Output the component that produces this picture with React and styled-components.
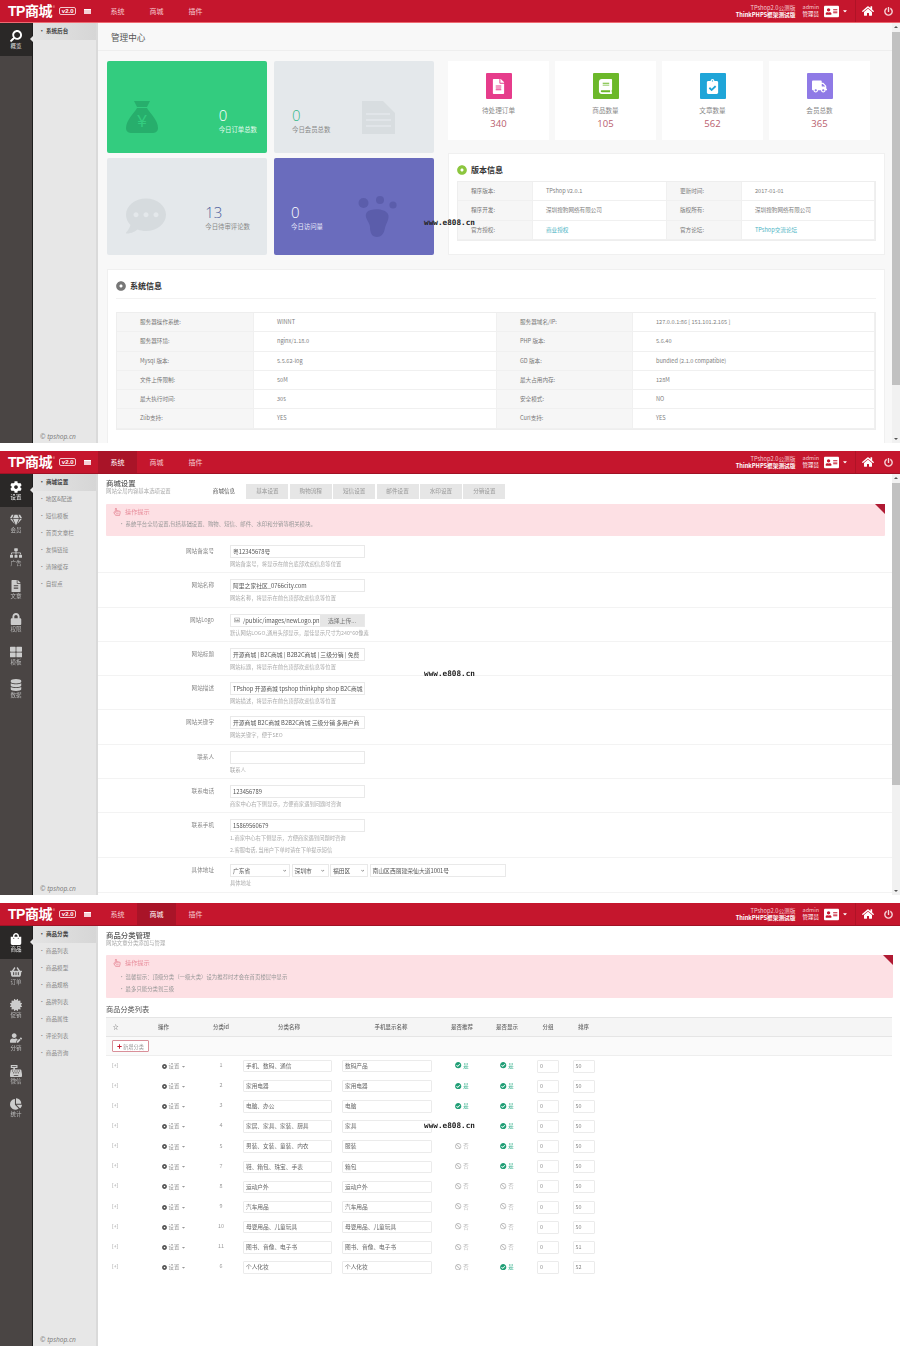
import styled, { createGlobalStyle } from "styled-components"
import {
  FaSearch, FaCog, FaGem, FaSitemap, FaFileAlt, FaLock, FaThLarge, FaDatabase,
  FaShoppingBag, FaShoppingBasket, FaCertificate, FaUserEdit, FaCashRegister, FaChartPie,
  FaHome, FaPowerOff, FaAddressCard, FaCaretDown, FaCommentDots, FaBook,
  FaClipboardCheck, FaTruck, FaCheckCircle, FaBan, FaPlus, FaRegHandPointer, FaRegImage,
  FaDotCircle, FaChevronDown,
} from "react-icons/fa"

const GlobalStyle = createGlobalStyle`
  html, body { margin: 0; padding: 0; background: #fff; }
  * { box-sizing: border-box; }
  body { font-family: "Noto Sans CJK SC", "Open Sans", sans-serif; }
`

const Page = styled.div`
  width: 900px;
  height: 1346px;
  display: flex;
  flex-direction: column;
  gap: 8px;
  overflow: hidden;
  filter: blur(0.35px);
`
const Screen = styled.section`
  position: relative;
  height: ${p => p.$h}px;
  display: flex;
  flex-direction: column;
  overflow: hidden;
`
const Watermark = styled.div`
  position: absolute;
  left: 424px;
  top: 218px;
  font: 600 7.7px/10px "DejaVu Sans Mono", monospace;
  color: #222;
`

/* top bar */
const Bar = styled.header`
  height: 23px;
  flex: none;
  display: flex;
  align-items: stretch;
  background: #c5162d;
  border-bottom: 1px solid ${p => p.$line};
  color: #fff;
`
const Brand = styled.div`
  width: 98px;
  flex: none;
  display: flex;
  align-items: center;
  padding-left: 8px;
`
const LogoText = styled.span`
  font: 700 14px/1 "Liberation Sans", "Noto Sans CJK SC", sans-serif;
  letter-spacing: -0.5px;
`
const LogoMark = styled.sup`
  font-size: 4px;
  align-self: flex-start;
  margin: 4px 0 0 1px;
  color: #f0b0b8;
`
const Version = styled.span`
  margin-left: 4px;
  height: 8px;
  padding: 0 2px;
  border: 1px solid #f3c9cf;
  border-radius: 2px;
  font: bold 6px/6px "Liberation Sans", sans-serif;
`
const MenuDot = styled.span`
  margin-left: 8px;
  width: 7px;
  height: 5px;
  background: #f4d0d5;
  border-top: 1px solid #fff;
`
const NavItem = styled.a`
  width: 39px;
  display: flex;
  align-items: center;
  justify-content: center;
  font-size: 7px;
  color: ${p => (p.$on ? "#fff" : "#f5cdd2")};
  background: ${p => (p.$on ? "#a91428" : "transparent")};
`
const BarRight = styled.div`
  margin-left: auto;
  display: flex;
  align-items: center;
  padding-right: 7px;
  height: 100%;
`
const Notice = styled.div`
  text-align: right;
  font-size: 5.7px;
  line-height: 7px;
  color: #f6ccd2;
  b { display: block; color: #fff; font-weight: 700; }
`
const Admin = styled.div`
  margin-left: 7px;
  text-align: right;
  font-size: 5.5px;
  line-height: 7px;
  color: #f6ccd2;
  span { display: block; color: #fff; }
`
const BarIcon = styled.span`
  display: flex;
  margin-left: ${p => p.$ml}px;
  font-size: ${p => p.$size}px;
  color: ${p => p.$color || "#fff"};
`
const BarLine = styled.span`
  width: 1px;
  height: 100%;
  margin-left: 7px;
  background: #b01326;
`

/* left columns */
const Body = styled.div`
  flex: 1;
  min-height: 0;
  display: flex;
`
const Rail = styled.nav`
  width: 33px;
  flex: none;
  background: #4a4544;
  border-right: 1px solid #1e1e1e;
`
const RailItem = styled.a`
  position: relative;
  height: 33px;
  display: flex;
  flex-direction: column;
  align-items: center;
  justify-content: center;
  font-size: 5.5px;
  line-height: 7px;
  color: ${p => (p.$on ? "#eee" : "#bbb")};
  background: ${p => (p.$on ? "#2a2827" : "transparent")};
  svg { font-size: 12px; color: ${p => (p.$on ? "#fff" : "#ccc")}; margin-bottom: 1px; }
  ${p => p.$on && `
    &::after {
      content: "";
      position: absolute;
      right: -1px;
      top: 13px;
      border: 3px solid transparent;
      border-right-color: #e7e7e7;
      border-left-width: 0;
    }
  `}
`
const MirrorSearch = styled(FaSearch)`
  transform: scaleX(-1);
`
const SubNav = styled.div`
  width: 65px;
  flex: none;
  display: flex;
  flex-direction: column;
  background: #e7e7e7;
  border-right: 2px solid #dadada;
`
const SubItem = styled.a`
  height: 17px;
  flex: none;
  padding-left: 6px;
  font-size: 5.6px;
  line-height: 17px;
  color: ${p => (p.$on ? "#444" : "#888")};
  font-weight: ${p => (p.$on ? 600 : 400)};
  background: ${p => (p.$on ? "linear-gradient(90deg, #e3e3e3, #d6d6d6)" : "transparent")};
  &::before { content: "· "; }
`
const Copy = styled.div`
  margin-top: auto;
  padding: 0 0 1px 7px;
  font: italic 6.6px/11px "Open Sans", sans-serif;
  color: #777;
`

/* scrollbar */
const Track = styled.div`
  width: 8px;
  flex: none;
  position: relative;
  background: #f1f1f1;
  &::before, &::after {
    content: "";
    position: absolute;
    left: 2px;
    border: 2px solid transparent;
    border-top-width: 0;
    border-bottom: 2px solid #555;
  }
  &::before { top: 3px; }
  &::after { bottom: 3px; transform: rotate(180deg); }
`
const Thumb = styled.div`
  margin-top: 9px;
  height: ${p => p.$h}px;
  background: #c1c1c1;
`

/* shared main */
const Main = styled.main`
  flex: 1;
  min-width: 0;
  overflow: hidden;
  background: ${p => p.$bg || "#fff"};
`

/* dashboard */
const TitleRow = styled.div`
  height: 28px;
  padding: 7px 0 0 13px;
  font-size: 8.6px;
  line-height: 14px;
  color: #555;
  border-bottom: 1px solid #eee;
`
const Dash = styled.div`
  padding: 10px 7px 0 9px;
  display: grid;
  grid-template-columns: 327px 437px;
  column-gap: 14px;
`
const Tiles = styled.div`
  display: grid;
  grid-template-columns: 160px 160px;
  grid-template-rows: 92px 97px;
  gap: 5px 7px;
`
const Tile = styled.div`
  position: relative;
  border-radius: 2px;
  background: ${p => p.$bg};
  display: flex;
  align-items: center;
  justify-content: ${p => (p.$reverse ? "flex-start" : "flex-end")};
  padding: ${p => p.$pad};
  color: ${p => p.$color};
`
const TileArt = styled.span`
  position: absolute;
  left: ${p => p.$x}px;
  top: ${p => p.$y}px;
  display: flex;
  font-size: ${p => p.$size}px;
  color: ${p => p.$color};
`
const TileNum = styled.div`
  font: 300 15px/17px "Open Sans", sans-serif;
  color: ${p => p.$color};
`
const TileText = styled.div`
  margin-top: 1px;
  font-size: 6.4px;
  line-height: 9px;
`
const RightCol = styled.div`
  display: flex;
  flex-direction: column;
  gap: 13px;
`
const Stats = styled.div`
  width: 422px;
  display: grid;
  grid-template-columns: repeat(4, 101px);
  justify-content: space-between;
`
const Stat = styled.div`
  height: 79px;
  background: #fff;
  display: flex;
  flex-direction: column;
  align-items: center;
  padding-top: 12px;
`
const StatIcon = styled.span`
  width: 26px;
  height: 26px;
  border-radius: 1px;
  background: ${p => p.$bg};
  display: flex;
  align-items: center;
  justify-content: center;
  color: #fff;
  font-size: 15px;
`
const StatName = styled.div`
  margin-top: 7px;
  font-size: 6.6px;
  line-height: 9px;
  color: #888;
`
const StatNum = styled.div`
  margin-top: 3px;
  font: 9.5px/12px "Open Sans", sans-serif;
  color: #b9606e;
`
const Panel = styled.div`
  background: #fff;
  border: 1px solid #f0f0f0;
  padding: 10px 8px 0;
  height: ${p => p.$h}px;
`
const SystemBox = styled(Panel)`
  grid-column: 1 / 3;
  margin-top: 14px;
`
const PanelTitle = styled.div`
  display: flex;
  align-items: center;
  gap: 4px;
  font-size: 8px;
  font-weight: 700;
  line-height: 12px;
  color: #333;
`
const TitleDot = styled.span`
  display: flex;
  font-size: 10px;
  color: ${p => p.$color};
`
const Rule = styled.div`
  height: 1px;
  margin: 6px 0 13px;
  background: #f2f2f2;
`
const InfoTable = styled.div`
  display: grid;
  grid-template-columns: ${p => p.$cols};
  border: 1px solid #eee;
  margin-top: ${p => p.$mt || 0}px;
`
const InfoCell = styled.div`
  height: 19.3px;
  font-size: 5.6px;
  line-height: 18px;
  white-space: nowrap;
  overflow: hidden;
  border-bottom: 1px solid #f0f0f0;
  border-right: 1px solid #f0f0f0;
  padding-left: ${p => p.$pl}px;
  color: ${p => (p.$link ? "#4bb4c4" : p.$label ? "#777" : "#808080")};
  background: ${p => (p.$label ? "#f6f6f6" : "#fff")};
`

/* page heading */
const Heading = styled.div`
  flex: none;
  width: ${p => p.$w || 200}px;
  h2 { margin: 0; font-size: 7.4px; line-height: 9px; font-weight: 500; color: #555; }
  p { margin: 0; font-size: 5.4px; line-height: 8px; color: #aaa; }
`
const TopRow = styled.div`
  display: flex;
  padding: 4px 0 0 8px;
  height: ${p => p.$h}px;
`
const Tabs = styled.div`
  display: flex;
  padding-top: 6px;
  gap: 1.4px;
`
const Tab = styled.a`
  width: 42px;
  height: 14.5px;
  text-align: center;
  font-size: 5.6px;
  line-height: 14px;
  color: ${p => (p.$on ? "#555" : "#999")};
  background: ${p => (p.$on ? "#fff" : "#e6e6e6")};
`
const TipBox = styled.div`
  position: relative;
  margin: 0 7px ${p => p.$mb || 0}px 8px;
  height: ${p => p.$h}px;
  padding: 3px 0 0 7px;
  background: #fde0e4;
  border-radius: 1px;
  &::after {
    content: "";
    position: absolute;
    right: 0;
    top: 0;
    border-style: solid;
    border-width: 0 10px 10px 0;
    border-color: transparent #b01a33 transparent transparent;
  }
`
const TipHead = styled.div`
  display: flex;
  align-items: center;
  gap: 4px;
  font-size: 6.2px;
  line-height: 9px;
  color: #e88e9c;
  svg { font-size: 8px; }
`
const TipLine = styled.div`
  margin: ${p => p.$mt}px 0 0 6px;
  font-size: 5.4px;
  line-height: 8px;
  color: #999;
  &::before { content: "· "; }
`

/* settings form */
const FormRow = styled.div`
  display: grid;
  grid-template-columns: 108px 1fr;
  column-gap: 16px;
  height: ${p => p.$h || 34.3}px;
  padding: 6px 0 0 8px;
  border-bottom: 1px solid #f3f3f3;
`
const FormLabel = styled.div`
  text-align: right;
  font-size: 5.6px;
  line-height: 12px;
  color: #888;
`
const FieldRow = styled.div`
  display: flex;
  gap: 1.5px;
`
const Field = styled.div`
  width: ${p => p.$w || 135}px;
  height: 13px;
  padding: 0 2px;
  border: 1px solid #e9e9e9;
  background: #fff;
  font-size: 5.8px;
  line-height: 11px;
  color: #555;
  white-space: nowrap;
  overflow: hidden;
`
const UploadField = styled.div`
  width: 135px;
  height: 13px;
  display: flex;
  border: 1px solid #e9e9e9;
  font-size: 5.8px;
  line-height: 11px;
  color: #555;
  white-space: nowrap;
`
const UploadPath = styled.div`
  width: 89px;
  padding-left: 3px;
  display: flex;
  align-items: center;
  gap: 3px;
  svg { flex: none; font-size: 6px; color: #999; }
`
const UploadBtn = styled.div`
  flex: 1;
  text-align: center;
  background: #e6e6e6;
  color: #777;
`
const Select = styled(Field)`
  display: flex;
  align-items: center;
  justify-content: space-between;
  svg { font-size: 3.5px; color: #555; margin-right: 1px; }
`
const FormTip = styled.div`
  font-size: 5.3px;
  line-height: 11px;
  margin-top: 1px;
  color: #aaa;
`

/* category table */
const ListTitle = styled.div`
  margin: 6px 0 3px 8px;
  font-size: 7.2px;
  line-height: 10px;
  color: #555;
`
const GRID = "50px 50px 30px 106px 98px 44px 46px 36px 35px 1fr"
const TableHead = styled.div`
  display: grid;
  grid-template-columns: ${GRID};
  margin-left: 8px;
  width: 786px;
  height: 20px;
  background: #f5f5f5;
  border-top: 1px solid #e5e5e5;
  border-bottom: 1px solid #e5e5e5;
  font-size: 5.5px;
  font-weight: 500;
  line-height: 18px;
  color: #666;
`
const HeadCell = styled.div`
  text-align: ${p => (p.$left ? "left" : "center")};
  padding-left: ${p => p.$pl || 0}px;
`
const Toolbar = styled.div`
  margin-left: 8px;
  width: 786px;
  height: 19px;
  padding: 3px 0 0 6px;
  background: #fafafa;
  border-bottom: 1px solid #eee;
`
const AddBtn = styled.a`
  width: 37px;
  height: 12px;
  display: flex;
  align-items: center;
  justify-content: center;
  gap: 1px;
  background: #fff;
  border: 1px solid #d98f99;
  border-radius: 1px;
  font-size: 5.2px;
  color: #999;
  svg { font-size: 5px; color: #c5162d; }
`
const CatRow = styled.div`
  display: grid;
  grid-template-columns: ${GRID};
  align-items: center;
  margin-left: 8px;
  height: 20.15px;
  font-size: 5.4px;
  color: #999;
`
const Expand = styled.div`
  padding-left: 6px;
  margin-top: -4px;
  font-size: 5px;
`
const Setup = styled.div`
  display: flex;
  align-items: center;
  gap: 1.5px;
  padding-left: 6px;
  svg { flex: none; }
`
const CellCenter = styled.div`
  text-align: center;
  margin-top: -2px;
`
const TextCell = styled.div`
  width: ${p => p.$w}px;
  height: 12.5px;
  margin-left: ${p => p.$ml || 0}px;
  padding-left: 2px;
  border: 1px solid #ebebeb;
  border-radius: 1px;
  font-size: 5.7px;
  line-height: 10.5px;
  color: #666;
`
const Flag = styled.div`
  display: flex;
  align-items: center;
  justify-content: center;
  gap: 1.5px;
  margin-top: -1px;
  font-size: 5.4px;
  color: ${p => (p.$yes ? "#3db492" : "#bbb")};
  svg { font-size: 6.4px; color: ${p => (p.$yes ? "#1f9e75" : "#bbb")}; }
`
const NumCell = styled.div`
  width: 22px;
  height: 13px;
  margin: 0 auto;
  padding-left: 2px;
  border: 1px solid #ebebeb;
  border-radius: 1px;
  font-size: 5.4px;
  line-height: 11px;
  color: #888;
`
const SideDrop = styled(FaCaretDown)`
  font-size: 5px;
`

const MoneyBag = () => (
  <svg width="34" height="34" viewBox="0 0 34 34">
    <path d="M9 1h16l-3 6H12z" fill="#27ae6c" />
    <path d="M12 8h10c2 4 11 12 11 20 0 4-3 5-6 5H7c-3 0-6-1-6-5C1 20 10 12 12 8z" fill="#27ae6c" />
    <text x="17" y="27" textAnchor="middle" fontSize="17" fill="#33cc7f" fontFamily="Liberation Sans">¥</text>
  </svg>
)

const PageArt = () => (
  <svg width="35" height="35" viewBox="0 0 35 35">
    <path d="M1 1h21l12 12v21H1z" fill="#d8dde0" />
    <path d="M5 14h24M5 20h25M5 26h25" stroke="#e4e8eb" strokeWidth="1.6" />
  </svg>
)

const FootPrint = () => (
  <svg width="40" height="42" viewBox="0 0 40 42" fill="#5b5dab">
    <circle cx="5.5" cy="7" r="5" />
    <circle cx="22" cy="4" r="4" />
    <circle cx="35" cy="9" r="3.6" />
    <path d="M9 16c4-4 18-4 21 2 2 5-2 9-3 14-1 6-4 9-8 9-5 0-7-4-7-10 0-5-7-10-3-15z" />
  </svg>
)

const Header = ({ active, line }) => (
  <Bar $line={line}>
    <Brand>
      <LogoText>TP商城</LogoText>
      <LogoMark>®</LogoMark>
      <Version>v2.0</Version>
      <MenuDot />
    </Brand>
    {["系统", "商城", "插件"].map(n => (
      <NavItem key={n} $on={n === active}>{n}</NavItem>
    ))}
    <BarRight>
      <Notice>TPshop2.0公测版<b>ThinkPHP5框架测试版</b></Notice>
      <Admin>admin<span>管理员</span></Admin>
      <BarIcon $ml={5} $size={15}><FaAddressCard /></BarIcon>
      <BarIcon $ml={3} $size={6}><FaCaretDown /></BarIcon>
      <BarLine />
      <BarIcon $ml={6} $size={12}><FaHome /></BarIcon>
      <BarIcon $ml={10} $size={9} $color="#f6d5d9"><FaPowerOff /></BarIcon>
    </BarRight>
  </Bar>
)

const Side = ({ rail, subs }) => (
  <>
    <Rail>
      {rail.map(([Icon, name], i) => (
        <RailItem key={name} $on={i === 0}><Icon />{name}</RailItem>
      ))}
    </Rail>
    <SubNav>
      {subs.map((s, i) => <SubItem key={s} $on={i === 0}>{s}</SubItem>)}
      <Copy>© tpshop.cn</Copy>
    </SubNav>
  </>
)

const stats = [
  ["#e63c8b", FaFileAlt, "待处理订单", 340],
  ["#6cb82a", FaBook, "商品数量", 105],
  ["#1fa5d8", FaClipboardCheck, "文章数量", 562],
  ["#8f7ae6", FaTruck, "会员总数", 365],
]
const versionInfo = [
  ["程序版本:", "TPshop v2.0.1", "更新时间:", "2017-01-01"],
  ["程序开发:", "深圳搜豹网络有限公司", "版权所有:", "深圳搜豹网络有限公司"],
  ["官方授权:", "商业授权", "官方论坛:", "TPshop交流论坛"],
]
const systemInfo = [
  ["服务器操作系统:", "WINNT", "服务器域名/IP:", "127.0.0.1:86 [ 151.101.2.165 ]"],
  ["服务器环境:", "nginx/1.18.0", "PHP 版本:", "5.6.40"],
  ["Mysql 版本:", "5.5.62-log", "GD 版本:", "bundled (2.1.0 compatible)"],
  ["文件上传限制:", "50M", "最大占用内存:", "128M"],
  ["最大执行时间:", "30s", "安全模式:", "NO"],
  ["Zlib支持:", "YES", "Curl支持:", "YES"],
]

const Dashboard = () => (
  <Main $bg="#f8f8f8">
    <TitleRow>管理中心</TitleRow>
    <Dash>
      <Tiles>
        <Tile $bg="#33cc7f" $color="#e3fbee" $pad="26px 10px 0 0">
          <TileArt $x={18} $y={39}><MoneyBag /></TileArt>
          <div><TileNum $color="#fff">0</TileNum><TileText>今日订单总数</TileText></div>
        </Tile>
        <Tile $bg="#e4e8eb" $color="#888" $reverse $pad="26px 0 0 18px">
          <TileArt $x={87} $y={39}><PageArt /></TileArt>
          <div><TileNum $color="#35b98a">0</TileNum><TileText>今日会员总数</TileText></div>
        </Tile>
        <Tile $bg="#e4e8eb" $color="#888" $pad="22px 17px 0 0">
          <TileArt $x={19} $y={38} $size={40} $color="#d6dbde"><FaCommentDots /></TileArt>
          <div><TileNum $color="#4f5f9c">13</TileNum><TileText>今日待审评论数</TileText></div>
        </Tile>
        <Tile $bg="#6a6cbd" $color="#e8e8fa" $reverse $pad="22px 0 0 17px">
          <TileArt $x={84} $y={38}><FootPrint /></TileArt>
          <div><TileNum $color="#fff">0</TileNum><TileText>今日访问量</TileText></div>
        </Tile>
      </Tiles>
      <RightCol>
        <Stats>
          {stats.map(([bg, Icon, name, n]) => (
            <Stat key={name}>
              <StatIcon $bg={bg}><Icon /></StatIcon>
              <StatName>{name}</StatName>
              <StatNum>{n}</StatNum>
            </Stat>
          ))}
        </Stats>
        <Panel $h={102}>
          <PanelTitle><TitleDot $color="#8cc63f"><FaDotCircle /></TitleDot>版本信息</PanelTitle>
          <InfoTable $cols="75px 134px 75px 1fr" $mt={5}>
            {versionInfo.flat().map((t, i) => (
              <InfoCell key={i} $label={i % 2 === 0} $pl={13} $link={i === 9 || i === 11}>{t}</InfoCell>
            ))}
          </InfoTable>
        </Panel>
      </RightCol>
      <SystemBox $h={175}>
        <PanelTitle><TitleDot $color="#777"><FaDotCircle /></TitleDot>系统信息</PanelTitle>
        <Rule />
        <InfoTable $cols="137px 243px 136px 1fr">
          {systemInfo.flat().map((t, i) => (
            <InfoCell key={i} $label={i % 2 === 0} $pl={23}>{t}</InfoCell>
          ))}
        </InfoTable>
      </SystemBox>
    </Dash>
  </Main>
)

const formRows = [
  ["网站备案号", "粤12345678号", "网站备案号，将显示在前台底部欢迎信息等位置"],
  ["网站名称", "阿里之家社区_0766city.com", "网站名称，将显示在前台顶部欢迎信息等位置"],
  ["网站Logo", null, "默认网站LOGO,通用头部显示，最佳显示尺寸为240*60像素"],
  ["网站标题", "开源商城 | B2C商城 | B2B2C商城 | 三级分销 | 免费", "网站标题，将显示在前台顶部欢迎信息等位置"],
  ["网站描述", "TPshop 开源商城 tpshop thinkphp shop B2C商城", "网站描述，将显示在前台顶部欢迎信息等位置"],
  ["网站关键字", "开源商城 B2C商城 B2B2C商城 三级分销 多用户商", "网站关键字，便于SEO"],
  ["联系人", "", "联系人"],
  ["联系电话", "123456789", "商家中心右下侧显示，方便商家遇到问题时咨询"],
]

const SettingsPage = () => (
  <Main>
    <TopRow $h={30}>
      <Heading $w={97}>
        <h2>商城设置</h2>
        <p>网站全局内容基本选项设置</p>
      </Heading>
      <Tabs>
        {["商城信息", "基本设置", "购物流程", "短信设置", "邮件设置", "水印设置", "分销设置"].map((t, i) => (
          <Tab key={t} $on={i === 0}>{t}</Tab>
        ))}
      </Tabs>
    </TopRow>
    <TipBox $h={32} $mb={3}>
      <TipHead><FaRegHandPointer />操作提示</TipHead>
      <TipLine $mt={4}>系统平台全局设置,包括基础设置、购物、短信、邮件、水印和分销等相关模块。</TipLine>
    </TipBox>
    {formRows.map(([label, value, tip]) => (
      <FormRow key={label}>
        <FormLabel>{label}</FormLabel>
        <div>
          {value === null ? (
            <UploadField>
              <UploadPath><FaRegImage />/public/images/newLogo.pn</UploadPath>
              <UploadBtn>选择上传...</UploadBtn>
            </UploadField>
          ) : <Field>{value}</Field>}
          <FormTip>{tip}</FormTip>
        </div>
      </FormRow>
    ))}
    <FormRow $h={45}>
      <FormLabel>联系手机</FormLabel>
      <div>
        <Field>15869560679</Field>
        <FormTip>1.商家中心右下侧显示，方便商家遇到问题时咨询</FormTip>
        <FormTip>2.客服电话, 当用户下单时请在下单提示短信</FormTip>
      </div>
    </FormRow>
    <FormRow>
      <FormLabel>具体地址</FormLabel>
      <div>
        <FieldRow>
          <Select $w={60}>广东省<FaChevronDown /></Select>
          <Select $w={37}>深圳市<FaChevronDown /></Select>
          <Select $w={38}>福田区<FaChevronDown /></Select>
          <Field $w={136}>南山区西丽建荣仙大道1001号</Field>
        </FieldRow>
        <FormTip>具体地址</FormTip>
      </div>
    </FormRow>
  </Main>
)

// rec: null where the watermark sits over that cell in the picture
const cats = [
  [1, "手机、数码、通信", "数码产品", 1, 1, 50],
  [2, "家用电器", "家用电器", 1, 1, 50],
  [3, "电脑、办公", "电脑", 1, 1, 50],
  [4, "家居、家具、家装、厨具", "家具", null, 1, 50],
  [5, "男装、女装、童装、内衣", "服装", 0, 1, 50],
  [7, "鞋、箱包、珠宝、手表", "箱包", 0, 1, 50],
  [8, "运动户外", "运动户外", 0, 0, 50],
  [9, "汽车用品", "汽车用品", 0, 0, 50],
  [10, "母婴用品、儿童玩具", "母婴用品、儿童玩具", 0, 0, 50],
  [11, "图书、音像、电子书", "图书、音像、电子书", 0, 0, 51],
  [6, "个人化妆", "个人化妆", 0, 1, 52],
]

const YesNo = ({ on }) => (
  <Flag $yes={on}>{on ? <FaCheckCircle /> : <FaBan />}{on ? "是" : "否"}</Flag>
)

const CategoryPage = () => (
  <Main>
    <TopRow $h={29}>
      <Heading>
        <h2>商品分类管理</h2>
        <p>网站文章分类添加与管理</p>
      </Heading>
    </TopRow>
    <TipBox $h={43}>
      <TipHead><FaRegHandPointer />操作提示</TipHead>
      <TipLine $mt={6}>温馨提示：顶级分类（一级大类）设为推荐时才会在首页楼层中显示</TipLine>
      <TipLine $mt={4}>最多只能分类到三级</TipLine>
    </TipBox>
    <ListTitle>商品分类列表</ListTitle>
    <TableHead>
      <HeadCell $left $pl={7}>☆</HeadCell>
      <HeadCell $left $pl={2}>操作</HeadCell>
      <HeadCell>分类id</HeadCell>
      <HeadCell>分类名称</HeadCell>
      <HeadCell>手机显示名称</HeadCell>
      <HeadCell>是否推荐</HeadCell>
      <HeadCell>是否显示</HeadCell>
      <HeadCell>分组</HeadCell>
      <HeadCell>排序</HeadCell>
    </TableHead>
    <Toolbar><AddBtn><FaPlus />新增分类</AddBtn></Toolbar>
    {cats.map(([id, name, mobile, rec, show, sort]) => (
      <CatRow key={id}>
        <Expand>[+]</Expand>
        <Setup><FaDotCircle color="#555" size={5} />设置<SideDrop /></Setup>
        <CellCenter>{id}</CellCenter>
        <TextCell $w={89} $ml={7}>{name}</TextCell>
        <TextCell $w={90}>{mobile}</TextCell>
        {rec === null ? <span /> : <YesNo on={rec} />}
        <YesNo on={show} />
        <NumCell>0</NumCell>
        <NumCell>{sort}</NumCell>
      </CatRow>
    ))}
  </Main>
)

const App = () => (
  <Page>
    <GlobalStyle />
    <Screen $h={443}>
      <Header active="" line="#ee6a72" />
      <Body>
        <Side rail={[[MirrorSearch, "概览"]]} subs={["系统后台"]} />
        <Dashboard />
        <Track><Thumb $h={353} /></Track>
      </Body>
      <Watermark>www.e808.cn</Watermark>
    </Screen>
    <Screen $h={444}>
      <Header active="系统" line="#a01225" />
      <Body>
        <Side
          rail={[[FaCog, "设置"], [FaGem, "会员"], [FaSitemap, "广告"], [FaFileAlt, "文章"], [FaLock, "权限"], [FaThLarge, "模板"], [FaDatabase, "数据"]]}
          subs={["商城设置", "地区&配送", "短信模板", "首页文章栏", "友情链接", "清除缓存", "自提点"]}
        />
        <SettingsPage />
        <Track><Thumb $h={302} /></Track>
      </Body>
      <Watermark>www.e808.cn</Watermark>
    </Screen>
    <Screen $h={443}>
      <Header active="商城" line="#a01225" />
      <Body>
        <Side
          rail={[[FaShoppingBag, "商品"], [FaShoppingBasket, "订单"], [FaCertificate, "促销"], [FaUserEdit, "分销"], [FaCashRegister, "微信"], [FaChartPie, "统计"]]}
          subs={["商品分类", "商品列表", "商品模型", "商品规格", "品牌列表", "商品属性", "评论列表", "商品咨询"]}
        />
        <CategoryPage />
      </Body>
      <Watermark>www.e808.cn</Watermark>
    </Screen>
  </Page>
)

export default App
